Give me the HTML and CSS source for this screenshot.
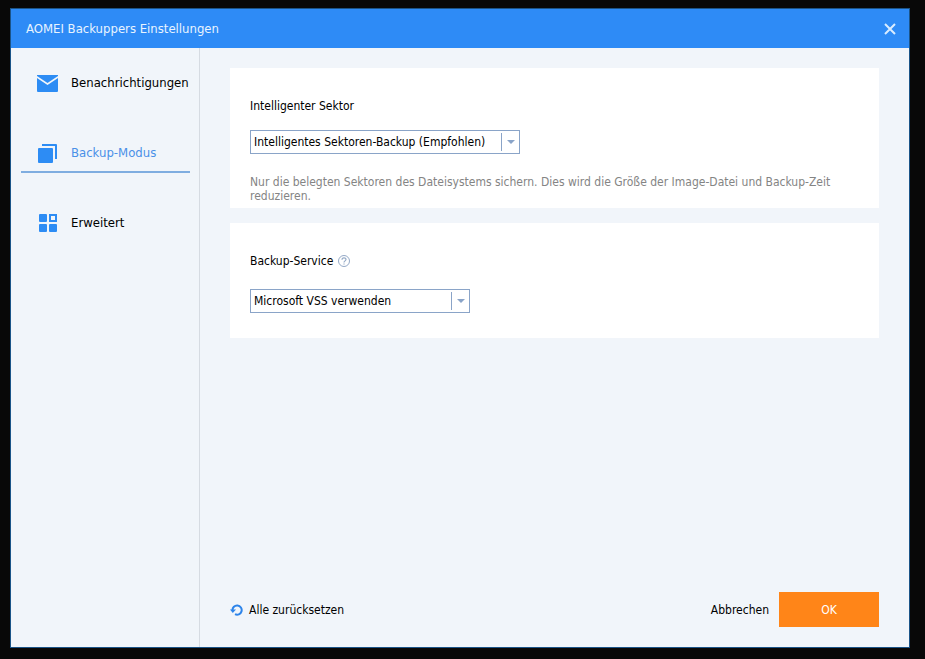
FILE: index.html
```html
<!DOCTYPE html>
<html lang="de">
<head>
    <meta charset="UTF-8">
    <meta name="viewport" content="width=device-width, initial-scale=1.0">
    <title>AOMEI Backuppers Einstellungen</title>
    <link rel="stylesheet" href="styles.css">
</head>
<body>
    <div class="window">
        <header class="titlebar">
            <h1>AOMEI Backuppers Einstellungen</h1>
            <button class="close" type="button" aria-label="Schließen">
                <svg width="12" height="12" viewBox="0 0 12 12" fill="none" stroke="#d9ecff" stroke-width="2">
                    <path d="M1 1l10 10M11 1L1 11"/>
                </svg>
            </button>
        </header>

        <div class="body">
            <nav class="sidebar">
                <a class="nav-item" href="#benachrichtigungen">
                    <svg width="22" height="18" viewBox="0 0 22 18" fill="#2d8cf4">
                        <path d="M0 1h21v1L10.500 9 0 2z"/>
                        <path d="M0 4l10.500 7L21 4v13a1 1 0 0 1-1 1H1a1 1 0 0 1-1-1z"/>
                    </svg>
                    Benachrichtigungen
                </a>
                <a class="nav-item active" href="#backup-modus">
                    <svg width="22" height="20" viewBox="0 0 22 20" fill="#2d8cf4">
                        <rect x="1" y="5" width="15" height="15" rx="1"/>
                        <path d="M5 1h14a1 1 0 0 1 1 1v14h-2V3H5z"/>
                    </svg>
                    Backup-Modus
                </a>
                <a class="nav-item" href="#erweitert">
                    <svg width="22" height="18" viewBox="0 0 22 18" fill="#2d8cf4">
                        <rect x="2" y="0" width="8" height="8" rx="1"/>
                        <rect x="2" y="10" width="8" height="8" rx="1"/>
                        <rect x="12" y="10" width="8" height="8" rx="1"/>
                        <rect x="13" y="1" width="6" height="6" fill="none" stroke="#2d8cf4" stroke-width="2"/>
                    </svg>
                    Erweitert
                </a>
            </nav>

            <main class="content">
                <section class="card">
                    <div class="label-row">
                        <label for="sector">Intelligenter Sektor</label>
                    </div>
                    <div class="select select-wide">
                        <select id="sector">
                            <option>Intelligentes Sektoren-Backup (Empfohlen)</option>
                        </select>
                        <span class="arrow"></span>
                    </div>
                    <p class="hint">Nur die belegten Sektoren des Dateisystems sichern. Dies wird die Größe der Image-Datei und Backup-Zeit reduzieren.</p>
                </section>

                <section class="card card-service">
                    <div class="label-row">
                        <label for="service">Backup-Service</label>
                        <svg width="12" height="12" viewBox="0 0 12 12" fill="none" stroke="#94a9c6">
                            <circle cx="6" cy="6" r="5.500"/>
                            <path d="M4 4.800C4 2.300 8 2.300 8 4.600 8 5.800 6 6 6 7.500M6 8.500v1" stroke-width="1.200"/>
                        </svg>
                    </div>
                    <div class="select">
                        <select id="service">
                            <option>Microsoft VSS verwenden</option>
                        </select>
                        <span class="arrow"></span>
                    </div>
                </section>

                <footer class="footer">
                    <button class="reset" type="button">
                        <svg width="13" height="12" viewBox="0 0 13 12" fill="none" stroke="#2d84ea" stroke-width="2">
                            <path d="M2.500 6.500A4.600 4.600 0 1 1 5 10.200"/>
                            <path d="M0 5.500h6L2.800 9z" fill="#2d84ea" stroke="none"/>
                        </svg>
                        Alle zurücksetzen
                    </button>
                    <button class="cancel" type="button">Abbrechen</button>
                    <button class="ok" type="button">OK</button>
                </footer>
            </main>
        </div>
    </div>
</body>
</html>
```
FILE: styles.css
```css
* {
    box-sizing: border-box;
}

body {
    margin: 0;
    min-height: 100vh;
    padding: 8px 15px 11px 10px;
    display: flex;
    background: #080808;
    color: #000;
    font-family: "DejaVu Sans Condensed", "Noto Sans", sans-serif;
    font-size: 12px;
    line-height: 14px;
}

button,
select {
    margin: 0;
    padding: 0;
    border: 0;
    background: none;
    color: inherit;
    font: inherit;
}

button {
    cursor: pointer;
}

svg {
    flex: none;
}

.window {
    flex: 1;
    display: flex;
    flex-direction: column;
    border: 1px solid #1b5488;
    background: #f1f5fa;
}

.titlebar {
    display: flex;
    align-items: center;
    justify-content: space-between;
    height: 39px;
    padding: 0 13px 0 15px;
    background: #2e8bf6;
    color: #e8f4ff;
}

.titlebar h1 {
    margin: 0;
    font-size: 13px;
    font-weight: normal;
}

.close {
    display: flex;
}

.body {
    flex: 1;
    display: flex;
}

.sidebar {
    width: 189px;
    padding: 17px 9px 0 10px;
    display: flex;
    flex-direction: column;
    gap: 32px;
    border-right: 1px solid #d6dbe2;
    font-size: 13px;
}

.nav-item {
    display: flex;
    align-items: center;
    gap: 12px;
    height: 38px;
    padding-left: 16px;
    border-bottom: 2px solid transparent;
    color: #000;
    text-decoration: none;
    white-space: nowrap;
}

.nav-item.active {
    border-color: #7fade0;
    color: #4a90e8;
}

.content {
    flex: 1;
    display: flex;
    flex-direction: column;
    gap: 15px;
    padding: 20px 30px;
}

.card {
    padding: 31px 20px 5px;
    background: #fff;
}

.card-service {
    padding-bottom: 25px;
}

.label-row {
    display: flex;
    align-items: center;
    gap: 5px;
    margin-bottom: 17px;
}

.card-service .label-row {
    margin-bottom: 21px;
}

.select {
    position: relative;
    width: 220px;
}

.select-wide {
    width: 270px;
}

.select select {
    display: block;
    width: 100%;
    height: 24px;
    padding: 0 20px 0 3px;
    appearance: none;
    border: 1px solid #8aa4c8;
    border-radius: 0;
    background: #fff;
}

.arrow {
    position: absolute;
    top: 3px;
    right: 1px;
    bottom: 3px;
    width: 18px;
    display: flex;
    align-items: center;
    justify-content: center;
    border-left: 1px solid #8aa4c8;
    pointer-events: none;
}

.arrow::after {
    content: "";
    border: 4px solid transparent;
    border-top-color: #8aa4c8;
    border-bottom: 0;
}

.hint {
    margin: 21px 0 0;
    color: #848484;
}

.footer {
    display: flex;
    align-items: center;
    margin-top: auto;
}

.reset {
    display: flex;
    align-items: center;
    gap: 6px;
    margin-right: auto;
}

.ok {
    width: 100px;
    height: 35px;
    margin-left: 10px;
    background: #ff8518;
    color: #fff;
}
```
